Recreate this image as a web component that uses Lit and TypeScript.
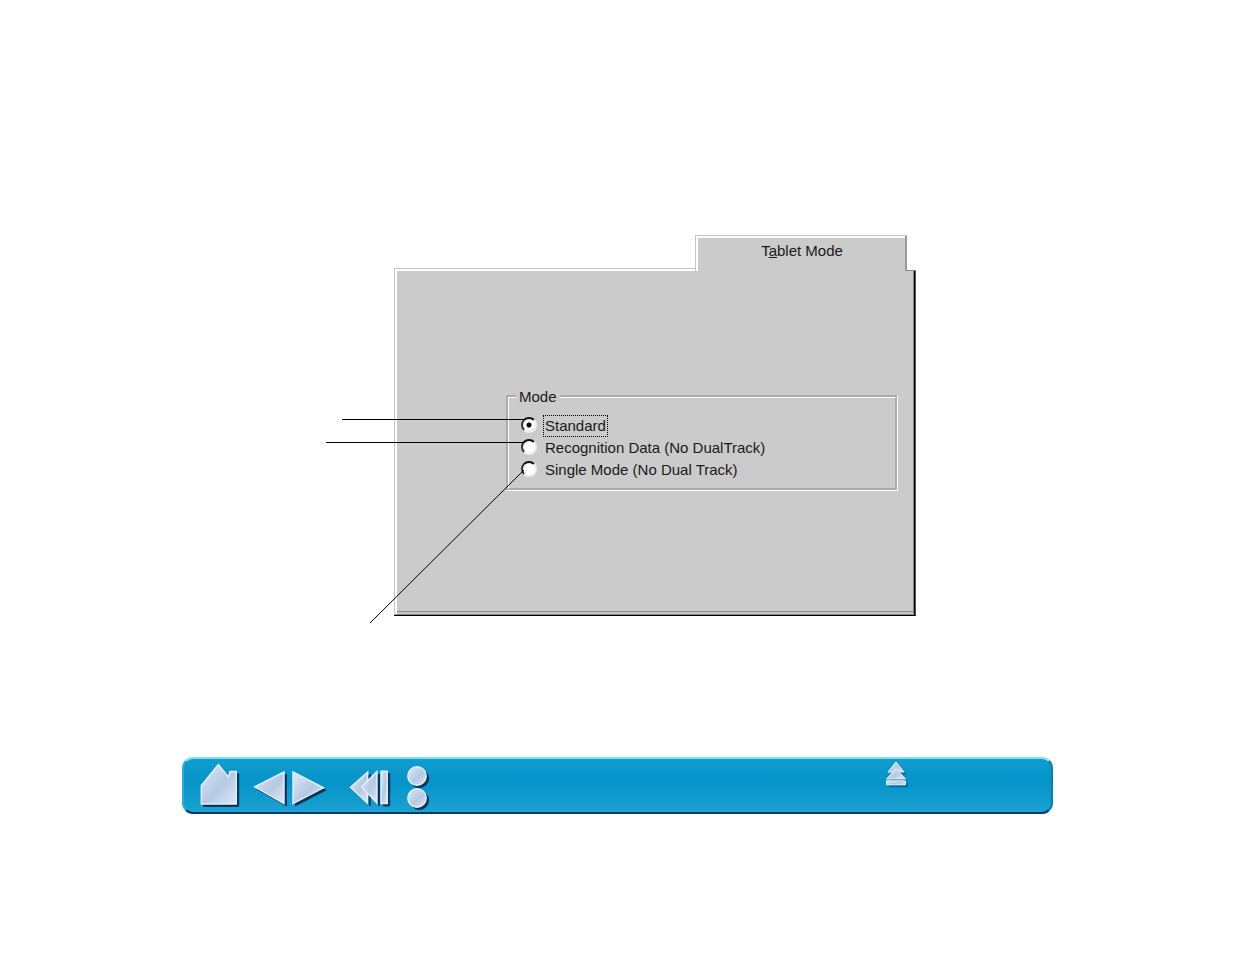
import { LitElement, html, css, svg } from "lit";
import { customElement, state } from "lit/decorators.js";

const MODES = [
  { id: "standard", label: "Standard" },
  { id: "recognition", label: "Recognition Data (No DualTrack)" },
  { id: "single", label: "Single Mode (No Dual Track)" },
];

@customElement("tablet-mode-panel")
class TabletModePanel extends LitElement {
  @state() mode = "standard";

  static styles = css`
    :host {
      display: flex;
      flex-direction: column;
      min-width: 0;
      color: #1a1a1a;
      font: 15px/22px "Liberation Sans", Arial, sans-serif;
    }
    .tab {
      align-self: flex-end;
      box-sizing: border-box;
      width: 212px;
      height: 36px;
      margin: 0 9px -3px 0;
      padding: 0 0 4px 2px;
      position: relative;
      z-index: 1;
      border: 0;
      background: #cbcbcb;
      box-shadow: inset 1px 1px #c4c4c4, inset -2px 0 #999, inset 3px 3px #fff;
      color: inherit;
      font: inherit;
    }
    /* notch between the tab and the right edge of the panel */
    .tab::after {
      content: "";
      position: absolute;
      right: -9px;
      bottom: 0;
      width: 9px;
      height: 3px;
      background: #fff;
      border-bottom: 1px solid #8a8a8a;
    }
    .panel {
      box-sizing: border-box;
      padding: 117px 17px 124px 112px;
      background: #cbcbcb;
      border-right: 1px solid #555;
      border-bottom: 1px solid #000;
      box-shadow: inset 1px 1px #c4c4c4, inset -1px 0 #000, inset 0 -1px #8a8a8a,
        inset 3px 3px #fff, inset -2px 0 #8a8a8a, inset 0 -3px #c4c4c4,
        inset 0 -4px #8a8a8a;
    }
    .group {
      position: relative;
      margin: 0;
      min-width: 0;
      padding: 8px 0 7px 12px;
      border: 3px groove #fff;
    }
    legend {
      margin-left: -5px;
      padding: 2px 3px 0;
      line-height: 20px;
    }
    .option {
      display: flex;
      align-items: center;
      gap: 6px;
      height: 22px;
    }
    .option span {
      padding: 0 1px;
      line-height: 20px;
      white-space: nowrap;
      border: 1px dotted transparent;
    }
    .option.on span {
      border-color: #000;
    }
    input {
      appearance: none;
      box-sizing: border-box;
      flex: none;
      width: 16px;
      height: 16px;
      margin: 0 0 3px;
      border: 2px solid;
      border-color: #111 #eee #eee #333;
      border-radius: 50%;
      background: #fff;
    }
    input:checked {
      background: radial-gradient(circle, #000 2px, #fff 3px);
    }
    .leaders {
      position: absolute;
      left: -183px;
      top: 1px;
      width: 200px;
      height: 220px;
      pointer-events: none;
    }
    .leaders path {
      fill: none;
      stroke: #000;
    }
  `;

  render() {
    return html`
      <button class="tab" type="button">T<u>a</u>blet Mode</button>
      <div class="panel">
        <fieldset class="group">
          <legend>Mode</legend>
          ${MODES.map(
            (m) => html`<label class="option ${this.mode === m.id ? "on" : ""}">
              <input
                type="radio"
                name="mode"
                .checked=${this.mode === m.id}
                @change=${() => (this.mode = m.id)}
              /><span>${m.label}</span>
            </label>`
          )}
          <svg class="leaders" viewBox="0 0 200 220" aria-hidden="true">
            <path d="M16 11.5H198M0 34.5H199M44 215L198 62" />
          </svg>
        </fieldset>
      </div>
    `;
  }
}

const both = (shape: (cls: string) => unknown) =>
  svg`<g transform="translate(2.4 2.4)">${shape("shade")}</g>${shape("face")}`;

const poly = (...points: string[]) =>
  points.map((p) => both((c) => svg`<polygon class=${c} points=${p} />`));

const dot = both((c) => svg`<circle class=${c} cx="11" cy="11" r="9.2" />`);

@customElement("nav-bar")
class NavBar extends LitElement {
  static styles = css`
    :host {
      display: block;
    }
    nav {
      box-sizing: border-box;
      display: flex;
      align-items: flex-start;
      height: 57px;
      padding: 4px 142px 0 14px;
      border: 2px solid;
      border-color: #7fe0f0 #087fae #02396c #27aed6;
      border-radius: 11px;
      background: linear-gradient(#109cce, #0594c9 45%, #1aa2d2);
    }
    button {
      display: block;
      padding: 0;
      border: 0;
      background: none;
    }
    svg {
      display: block;
      overflow: visible;
    }
    .arrows {
      display: flex;
      margin: 0 20px 0 10px;
    }
    .dots {
      display: grid;
      margin: 2px 0 0 14px;
    }
    .end {
      margin-left: auto;
    }
    .face {
      fill: url(#metal);
      stroke: #e4f1fc;
      stroke-width: 1.4;
    }
    .shade {
      fill: #053563;
      stroke: #053563;
    }
    .small .face {
      stroke-width: 1;
    }
    .small .shade {
      fill: #08679a;
      stroke: none;
    }
  `;

  button(label: string, w: number, h: number, art: unknown, cls = "") {
    return html`<button type="button" class=${cls} aria-label=${label}>
      <svg width=${w} height=${h} viewBox="0 0 ${w} ${h}" aria-hidden="true">
        <defs>
          <linearGradient id="metal" x1="0" y1="0" x2="1" y2="1">
            <stop offset="0" stop-color="#dce8f5" />
            <stop offset=".35" stop-color="#c4d5ea" />
            <stop offset=".55" stop-color="#b5c9e3" />
            <stop offset="1" stop-color="#dfe8f5" />
          </linearGradient>
        </defs>
        ${art}
      </svg>
    </button>`;
  }

  render() {
    return html`<nav aria-label="Document">
      ${this.button("Home", 44, 44, poly("20.3,1.5 30.5,14 32,8.5 38.3,8.5 38.3,41 3.3,41 3.3,22.5"))}
      <div class="arrows">
        ${this.button("Previous page", 38, 44, poly("2.5,23.8 32,9 32,40.5"))}
        ${this.button("Next page", 38, 44, poly("3,9 3,40.5 33.5,24.8"))}
      </div>
      ${this.button(
        "Go back",
        44,
        44,
        poly("2.5,24.3 19.7,9 19.7,40.5", "13.7,23.8 29,8.5 29,40.3", "33,8.2 39.3,8.2 39.3,40.5 33,40.5")
      )}
      <div class="dots">
        ${this.button("Contents", 22, 22, dot)} ${this.button("Index", 22, 22, dot)}
      </div>
      ${this.button(
        "Top",
        24,
        24,
        poly("11,-1 19,9 3,9", "11,5.5 20.5,16 1.5,16", "1.5,17.8 20.5,17.8 20.5,21.8 1.5,21.8"),
        "end small"
      )}
    </nav>`;
  }
}

@customElement("app-root")
class AppRoot extends LitElement {
  static styles = css`
    :host {
      display: block;
      min-height: 100vh;
      background: #fff;
    }
    .figure {
      display: grid;
      grid-template-columns: 394fr 522fr 319fr;
      padding-top: 235px;
    }
    tablet-mode-panel {
      grid-column: 2;
    }
    nav-bar {
      margin: 141px 182px 0;
    }
  `;

  render() {
    return html`
      <main class="figure"><tablet-mode-panel></tablet-mode-panel></main>
      <nav-bar></nav-bar>
    `;
  }
}
